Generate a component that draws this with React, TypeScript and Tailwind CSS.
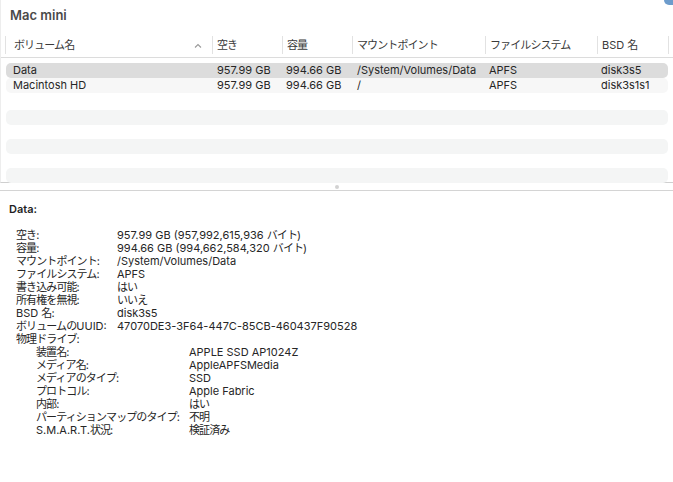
const FONT = { fontFamily: '"Inter", "Noto Sans CJK JP", sans-serif' };

const COLS = 'grid grid-cols-[207px_70px_70px_133px_112px_71px]';

const volumes = [
  { name: 'Data', free: '957.99 GB', cap: '994.66 GB', mount: '/System/Volumes/Data', fs: 'APFS', bsd: 'disk3s5' },
  { name: 'Macintosh HD', free: '957.99 GB', cap: '994.66 GB', mount: '/', fs: 'APFS', bsd: 'disk3s1s1' },
];

const details: [string, string][] = [
  ['空き:', '957.99 GB (957,992,615,936 バイト)'],
  ['容量:', '994.66 GB (994,662,584,320 バイト)'],
  ['マウントポイント:', '/System/Volumes/Data'],
  ['ファイルシステム:', 'APFS'],
  ['書き込み可能:', 'はい'],
  ['所有権を無視:', 'いいえ'],
  ['BSD 名:', 'disk3s5'],
  ['ボリュームのUUID:', '47070DE3-3F64-447C-85CB-460437F90528'],
];

const drive: [string, string][] = [
  ['装置名:', 'APPLE SSD AP1024Z'],
  ['メディア名:', 'AppleAPFSMedia'],
  ['メディアのタイプ:', 'SSD'],
  ['プロトコル:', 'Apple Fabric'],
  ['内部:', 'はい'],
  ['パーティションマップのタイプ:', '不明'],
  ['S.M.A.R.T.状況:', '検証済み'],
];

// Japanese glyphs are a touch narrower in the original UI font, so tighten only those runs
function Jp({ text }: { text: string }) {
  const parts = text.split(/([\u3000-\u30ff\u4e00-\u9fff]+)/);
  return (
    <>
      {parts.map((p, i) =>
        i % 2 === 1 ? (
          <span key={i} className="tracking-[-0.9px]">{p}</span>
        ) : (
          <span key={i}>{p}</span>
        ),
      )}
    </>
  );
}

function HeaderCell({ label, first, sort }: { label: string; first?: boolean; sort?: boolean }) {
  return (
    <div className={`flex h-[18px] items-center border-r border-[#e2e2e2] ${first ? 'pl-[8px] pr-[6px]' : 'px-[4px]'}`}>
      <span className="flex-1 truncate"><Jp text={label} /></span>
      {sort && (
        <svg width="8" height="5" viewBox="0 0 8 5" className="mr-[4px]">
          <path d="M1 4.5 L4 1.5 L7 4.5" fill="none" stroke="#9a9a9a" strokeWidth="1.1" />
        </svg>
      )}
    </div>
  );
}

export default function App() {
  return (
    <div className="relative h-[482px] w-[673px] overflow-hidden bg-white text-[11px] text-[#262626]" style={FONT}>
      <div className="absolute right-0 top-0 h-[5px] w-[9px] rounded-bl-[6px] bg-[#6d9ccc]" />

      <div className="flex h-[183px] flex-col border-b border-[#cfcfcf] border-l border-l-[#ededed]">
        <div className="px-[9px] pt-[7px] text-[13px] font-semibold leading-[16px] text-[#4a4a4a]">Mac mini</div>

        <div className="mt-[13px] border-b border-[#dcdcdc] pb-[3px]">
          <div className={`${COLS} ml-[4px] border-l border-[#e2e2e2] text-[#3a3a3a]`}>
            <HeaderCell label="ボリューム名" first sort />
            <HeaderCell label="空き" />
            <HeaderCell label="容量" />
            <HeaderCell label="マウントポイント" />
            <HeaderCell label="ファイルシステム" />
            <HeaderCell label="BSD 名" />
          </div>
        </div>

        <div className="mx-[5px] mt-[5px] flex flex-col">
          {volumes.map((v, i) => (
            <div
              key={v.name}
              className={`${COLS} h-[15px] items-center rounded-[5px] leading-[15px] ${i === 0 ? 'bg-[#dcdcdc]' : 'bg-[#f7f7f7]'}`}
            >
              <span className="pl-[7px]">{v.name}</span>
              <span className="pl-[4px]">{v.free}</span>
              <span className="pl-[3px]">{v.cap}</span>
              <span className="pl-[4px]">{v.mount}</span>
              <span className="pl-[3px]">{v.fs}</span>
              <span className="pl-[3px]">{v.bsd}</span>
            </div>
          ))}
          <div className="h-[17px]" />
          {[0, 1, 2, 3, 4].map((n) => (
            <div key={n} className={`h-[14.5px] rounded-[5px] ${n % 2 === 0 ? 'bg-[#f4f5f5]' : ''}`} />
          ))}
        </div>
      </div>

      <div className="flex h-[8px] items-center justify-center border-b border-[#d4d4d4] bg-white">
        <div className="h-[4px] w-[4px] rounded-full bg-[#d2d2d2]" />
      </div>

      <div className="px-[9px] pt-[12px] leading-[13px]">
        <div className="font-semibold text-[#1f1f1f]">Data:</div>
        <div className="mt-[13px] pl-[7px]">
          {details.map(([k, v]) => (
            <div key={k} className="grid grid-cols-[101px_1fr] whitespace-nowrap">
              <span><Jp text={k} /></span>
              <span><Jp text={v} /></span>
            </div>
          ))}
          <div><Jp text="物理ドライブ:" /></div>
          <div className="pl-[20px]">
            {drive.map(([k, v]) => (
              <div key={k} className="grid grid-cols-[153px_1fr] whitespace-nowrap">
                <span><Jp text={k} /></span>
                <span><Jp text={v} /></span>
              </div>
            ))}
          </div>
        </div>
      </div>
    </div>
  );
}
